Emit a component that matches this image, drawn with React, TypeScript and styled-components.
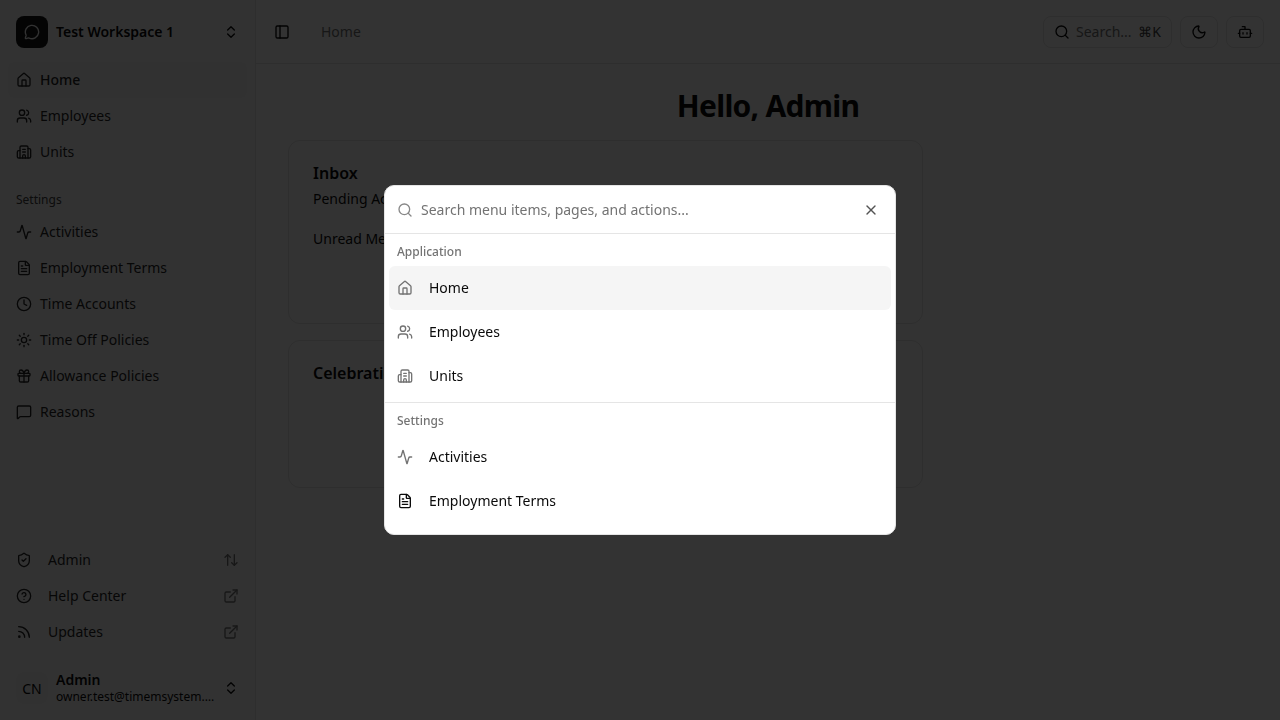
import React from "react";
import styled, { createGlobalStyle } from "styled-components";
import {
  Activity,
  ArrowUpDown,
  Bot,
  Building2,
  ChevronsUpDown,
  CircleHelp,
  Clock,
  ExternalLink,
  FileText,
  Gift,
  House,
  MessageCircle,
  MessageSquare,
  Moon,
  PanelLeft,
  Rss,
  Search,
  ShieldCheck,
  Sun,
  Users,
  X,
} from "lucide-react";

const GlobalStyle = createGlobalStyle`
  html, body {
    margin: 0;
    height: 100%;
    overflow: hidden;
    background: #fff;
    color: #0a0a0a;
    font-family: "Noto Sans", sans-serif;
  }
  * { box-sizing: border-box; }
`;

const Layout = styled.div`
  display: flex;
  width: 1280px;
  height: 720px;
`;

const Sidebar = styled.aside`
  width: 256px;
  flex-shrink: 0;
  display: flex;
  flex-direction: column;
  background: #fafafa;
  border-right: 1px solid #e5e5e5;
  padding: 8px;
`;

const Switcher = styled.div<{ $top?: number }>`
  display: flex;
  align-items: center;
  height: 48px;
  margin-top: ${(p) => p.$top ?? 0}px;
  padding: 0 8px;
  gap: 8px;
`;

const Logo = styled.div`
  width: 32px;
  height: 32px;
  border-radius: 8px;
  background: #171717;
  color: #fafafa;
  display: flex;
  align-items: center;
  justify-content: center;
  flex-shrink: 0;
`;

const Avatar = styled.div`
  width: 32px;
  height: 32px;
  border-radius: 8px;
  background: #f5f5f5;
  display: flex;
  align-items: center;
  justify-content: center;
  font-size: 14px;
  flex-shrink: 0;
`;

const SwitcherText = styled.div`
  flex: 1;
  min-width: 0;
  display: flex;
  flex-direction: column;
  line-height: 16px;
`;

const StrongName = styled.span`
  font-size: 14px;
  font-weight: 600;
  line-height: 18px;
`;

const Email = styled.span`
  font-size: 12px;
  line-height: 16px;
  white-space: nowrap;
  overflow: hidden;
  text-overflow: ellipsis;
`;

const NavGroup = styled.nav<{ $top?: number }>`
  display: flex;
  flex-direction: column;
  margin-top: ${(p) => p.$top ?? 0}px;
`;

const GroupLabel = styled.div`
  height: 29px;
  display: flex;
  align-items: center;
  padding: 0 8px 1px;
  font-size: 12px;
  color: #404040;
`;

const NavItem = styled.div<{ $active?: boolean; $wide?: boolean }>`
  display: flex;
  align-items: center;
  height: 36px;
  padding: 0 8px;
  gap: ${(p) => (p.$wide ? 16 : 8)}px;
  font-size: 14px;
  line-height: 20px;
  border-radius: 6px;
  color: #262626;
  background: ${(p) => (p.$active ? "#f5f5f5" : "transparent")};
  font-weight: ${(p) => (p.$active ? 500 : 400)};
  & > svg { flex-shrink: 0; }
`;

const NavLabel = styled.span`
  flex: 1;
`;

const Spacer = styled.div`
  flex: 1;
`;

const Main = styled.main`
  flex: 1;
  min-width: 0;
  display: flex;
  flex-direction: column;
`;

const Header = styled.header`
  height: 64px;
  flex-shrink: 0;
  display: flex;
  align-items: center;
  padding: 0 16px 0 12px;
  border-bottom: 1px solid #e5e5e5;
`;

const IconButton = styled.button`
  width: 28px;
  height: 28px;
  padding: 0;
  border: none;
  background: none;
  color: inherit;
  display: flex;
  align-items: center;
  justify-content: center;
`;

const Crumb = styled.span`
  margin-left: 25px;
  font-size: 14px;
  color: #737373;
`;

const HeaderActions = styled.div`
  margin-left: auto;
  display: flex;
  align-items: center;
  gap: 8px;
`;

const SearchButton = styled.div`
  width: 129px;
  height: 32px;
  border: 1px solid #e5e5e5;
  border-radius: 8px;
  display: flex;
  align-items: center;
  padding: 0 10px;
  gap: 6px;
  font-size: 14px;
  color: #737373;
`;

const Kbd = styled.span`
  margin-left: auto;
  color: #404040;
  white-space: nowrap;
`;

const OutlineButton = styled.div`
  width: 38px;
  height: 32px;
  border: 1px solid #e5e5e5;
  border-radius: 8px;
  display: flex;
  align-items: center;
  justify-content: center;
`;

const Content = styled.div`
  padding: 24px 32px;
`;

const Title = styled.h1`
  margin: 0 0 16px;
  height: 36px;
  font-size: 30px;
  line-height: 36px;
  font-weight: 700;
  text-align: center;
  letter-spacing: -0.75px;
`;

const Grid = styled.div`
  display: grid;
  grid-template-columns: repeat(3, 1fr);
  gap: 16px;
`;

const Card = styled.section<{ $height: number }>`
  grid-column: span 2;
  height: ${(p) => p.$height}px;
  border: 1px solid #e5e5e5;
  border-radius: 12px;
  padding: 20px 24px;
`;

const CardTitle = styled.h2`
  margin: 0 0 4px;
  font-size: 16px;
  line-height: 24px;
  font-weight: 600;
`;

const CardLine = styled.p`
  margin: 0 0 20px;
  font-size: 14px;
  line-height: 20px;
`;

const Overlay = styled.div`
  position: fixed;
  inset: 0;
  background: rgba(0, 0, 0, 0.8);
  display: flex;
  align-items: center;
  justify-content: center;
`;

const Dialog = styled.div`
  width: 512px;
  height: 350px;
  background: #fff;
  border: 1px solid #e5e5e5;
  border-radius: 10px;
  overflow: hidden;
  display: flex;
  flex-direction: column;
`;

const SearchRow = styled.div`
  height: 48px;
  flex-shrink: 0;
  display: flex;
  align-items: center;
  padding: 0 12px;
  gap: 8px;
  border-bottom: 1px solid #e5e5e5;
  font-size: 14px;
  color: #737373;
  & > svg { opacity: 0.85; }
`;

const SearchPlaceholder = styled.span`
  flex: 1;
`;

const CloseIcon = styled.span`
  display: flex;
  margin-right: 4px;
  color: #545454;
`;

const CommandGroup = styled.div`
  padding: 4px;
`;

const Divider = styled.div`
  height: 1px;
  background: #e5e5e5;
`;

const CommandHeading = styled.div`
  padding: 6px 8px;
  height: 28px;
  font-size: 12px;
  line-height: 16px;
  font-weight: 500;
  color: #737373;
`;

const CommandItem = styled.div<{ $selected?: boolean }>`
  height: 44px;
  display: flex;
  align-items: center;
  gap: 16px;
  padding: 0 8px;
  border-radius: 6px;
  font-size: 14px;
  line-height: 20px;
  background: ${(p) => (p.$selected ? "#f5f5f5" : "transparent")};
`;

const CommandIcon = styled.span<{ $dark?: boolean }>`
  display: flex;
  color: ${(p) => (p.$dark ? "#0a0a0a" : "#737373")};
`;

const mainNav = [
  { label: "Home", icon: House, active: true },
  { label: "Employees", icon: Users },
  { label: "Units", icon: Building2 },
];

const settingsNav = [
  { label: "Activities", icon: Activity },
  { label: "Employment Terms", icon: FileText },
  { label: "Time Accounts", icon: Clock },
  { label: "Time Off Policies", icon: Sun },
  { label: "Allowance Policies", icon: Gift },
  { label: "Reasons", icon: MessageSquare },
];

const footerNav = [
  { label: "Admin", icon: ShieldCheck, trailing: ArrowUpDown },
  { label: "Help Center", icon: CircleHelp, trailing: ExternalLink },
  { label: "Updates", icon: Rss, trailing: ExternalLink },
];

export default function App() {
  return (
    <>
      <GlobalStyle />
      <Layout>
        <Sidebar>
          <Switcher>
            <Logo>
              <MessageCircle size={16} />
            </Logo>
            <SwitcherText>
              <StrongName>Test Workspace 1</StrongName>
            </SwitcherText>
            <ChevronsUpDown size={16} />
          </Switcher>
          <NavGroup $top={6}>
            {mainNav.map((n) => (
              <NavItem key={n.label} $active={n.active}>
                <n.icon size={16} />
                {n.label}
              </NavItem>
            ))}
          </NavGroup>
          <NavGroup $top={15}>
            <GroupLabel>Settings</GroupLabel>
            {settingsNav.map((n) => (
              <NavItem key={n.label}>
                <n.icon size={16} />
                {n.label}
              </NavItem>
            ))}
          </NavGroup>
          <Spacer />
          <NavGroup>
            {footerNav.map((n) => (
              <NavItem key={n.label} $wide>
                <n.icon size={16} />
                <NavLabel>{n.label}</NavLabel>
                <n.trailing size={16} color="#737373" />
              </NavItem>
            ))}
          </NavGroup>
          <Switcher $top={14}>
            <Avatar>CN</Avatar>
            <SwitcherText>
              <StrongName>Admin</StrongName>
              <Email>owner.test@timemsystem.com</Email>
            </SwitcherText>
            <ChevronsUpDown size={16} />
          </Switcher>
        </Sidebar>
        <Main>
          <Header>
            <IconButton>
              <PanelLeft size={16} />
            </IconButton>
            <Crumb>Home</Crumb>
            <HeaderActions>
              <SearchButton>
                <Search size={16} color="#0a0a0a" />
                Search...
                <Kbd>⌘K</Kbd>
              </SearchButton>
              <OutlineButton>
                <Moon size={16} />
              </OutlineButton>
              <OutlineButton>
                <Bot size={16} />
              </OutlineButton>
            </HeaderActions>
          </Header>
          <Content>
            <Title>Hello, Admin</Title>
            <Grid>
              <Card $height={184}>
                <CardTitle>Inbox</CardTitle>
                <CardLine>Pending Actions</CardLine>
                <CardLine>Unread Messages</CardLine>
              </Card>
              <Card $height={148}>
                <CardTitle>Celebrations</CardTitle>
              </Card>
            </Grid>
          </Content>
        </Main>
      </Layout>
      <Overlay>
        <Dialog>
          <SearchRow>
            <Search size={16} />
            <SearchPlaceholder>Search menu items, pages, and actions...</SearchPlaceholder>
            <CloseIcon>
              <X size={16} />
            </CloseIcon>
          </SearchRow>
          <CommandGroup>
            <CommandHeading>Application</CommandHeading>
            <CommandItem $selected>
              <CommandIcon>
                <House size={16} />
              </CommandIcon>
              Home
            </CommandItem>
            <CommandItem>
              <CommandIcon>
                <Users size={16} />
              </CommandIcon>
              Employees
            </CommandItem>
            <CommandItem>
              <CommandIcon>
                <Building2 size={16} />
              </CommandIcon>
              Units
            </CommandItem>
          </CommandGroup>
          <Divider />
          <CommandGroup>
            <CommandHeading>Settings</CommandHeading>
            <CommandItem>
              <CommandIcon>
                <Activity size={16} />
              </CommandIcon>
              Activities
            </CommandItem>
            <CommandItem>
              <CommandIcon $dark>
                <FileText size={16} />
              </CommandIcon>
              Employment Terms
            </CommandItem>
          </CommandGroup>
        </Dialog>
      </Overlay>
    </>
  );
}
